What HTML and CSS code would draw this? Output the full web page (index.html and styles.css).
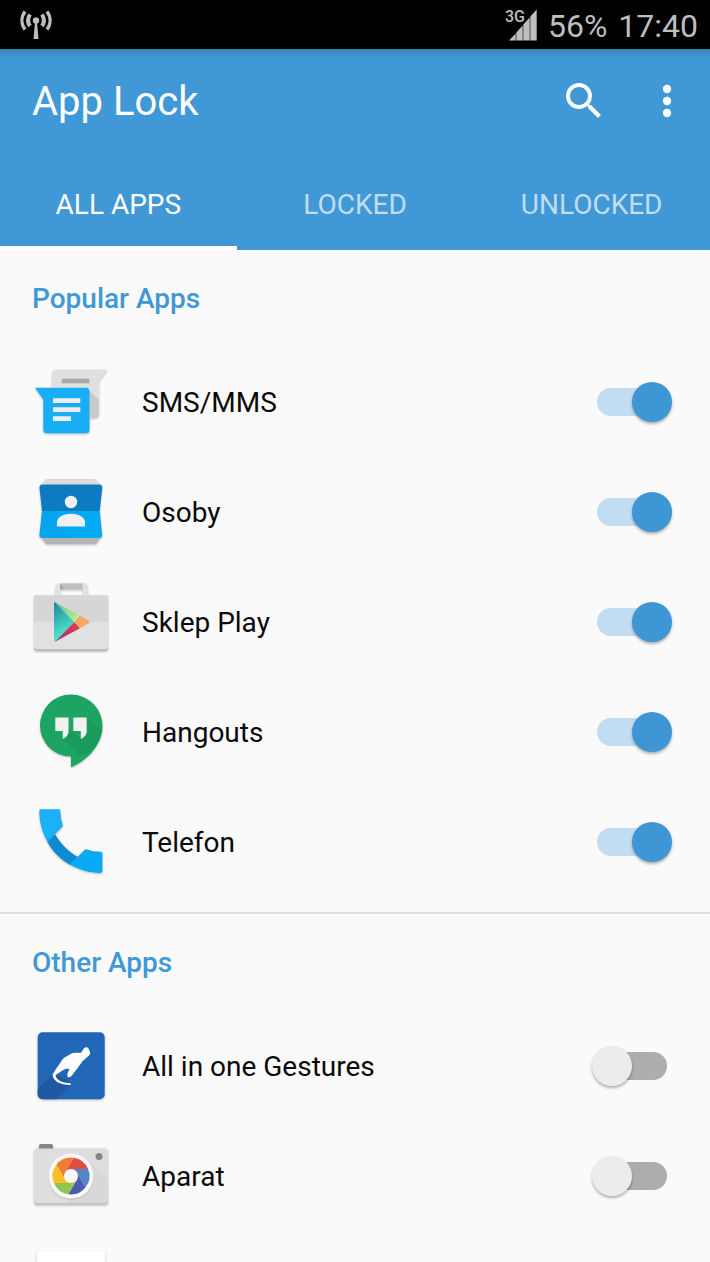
FILE: index.html
```html
<!DOCTYPE html>
<html lang="en">
<head>
<meta charset="utf-8">
<meta name="viewport" content="width=device-width, initial-scale=1">
<title>App Lock</title>
<link rel="stylesheet" href="styles.css">
</head>
<body>
<div class="app">
  <div class="status">
    <svg class="status-antenna" width="32" height="30" viewBox="0 0 32 30" aria-hidden="true">
      <g fill="none" stroke="#bebebe">
        <path stroke-width="3.400" d="M5 1.500C1 7 1 14 5 19.500M27 1.500C31 7 31 14 27 19.500"/>
        <path stroke-width="4" d="M10 4.500C7.500 8.500 7.500 12.500 10 16M22 4.500C24.500 8.500 24.500 12.500 22 16"/>
      </g>
      <circle cx="16" cy="10.500" r="3.200" fill="#bebebe"/>
      <path fill="#bebebe" d="M15 12h2l1.500 17h-5z"/>
    </svg>
    <div class="signal">
      <span class="network">3G</span>
      <svg width="28" height="32" viewBox="0 0 28 32" aria-hidden="true">
        <path fill="#bebebe" d="M0 31.500L6.700 24.500v7zM7.300 23.500l6.400-7v15h-6.400zM14.300 15.500l6.400-7v23h-6.400zM21.300 7.500L27.700.500v31h-6.400z"/>
      </svg>
    </div>
    <span class="battery">56%</span>
    <span class="clock">17:40</span>
  </div>

  <header class="header">
    <div class="toolbar">
      <h1 class="title">App Lock</h1>
      <button class="icon-button" type="button" aria-label="Search">
        <svg width="48" height="48" viewBox="0 0 24 24" fill="#fff"><path d="M15.500 14h-.79l-.28-.27A6.471 6.471 0 0 0 16 9.500 6.500 6.500 0 1 0 9.500 16c1.610 0 3.090-.59 4.230-1.570l.27.280v.79l5 4.990L20.490 19zm-6 0C7.010 14 5 11.990 5 9.500S7.010 5 9.500 5 14 7.010 14 9.500 11.990 14 9.500 14z"/></svg>
      </button>
      <button class="icon-button" type="button" aria-label="More options">
        <svg width="48" height="48" viewBox="0 0 24 24" fill="#fff"><circle cx="12" cy="6" r="2.100"/><circle cx="12" cy="12" r="2.100"/><circle cx="12" cy="18" r="2.100"/></svg>
      </button>
    </div>
    <nav class="tabs">
      <a class="tab tab-active" href="#all">ALL APPS</a>
      <a class="tab" href="#locked">LOCKED</a>
      <a class="tab" href="#unlocked">UNLOCKED</a>
    </nav>
  </header>

  <main class="content">
    <section class="section">
      <h2 class="heading">Popular Apps</h2>
      <label class="row">
        <svg class="icon" viewBox="0 0 78 78" aria-hidden="true">
          <path fill="#e0e0e0" d="M24 6.700h51.300L66.700 18v33a3.500 3.500 0 0 1-3.500 3.500H24a3.700 3.700 0 0 1-3.700-3.500V10.500A3.700 3.700 0 0 1 24 6.700z"/>
          <path fill="#b9b9b9" d="M57 27l9.700 10v14a3.500 3.500 0 0 1-3.500 3.500H57z" opacity=".6"/>
          <path fill="#a9a9a9" d="M29.700 15.700h27.600v4.600H29.700z"/>
          <path fill="#18aef6" d="M3 24.700h51a3.500 3.500 0 0 1 3.500 3.500v38.500a3.500 3.500 0 0 1-3.500 3.500H15a3.700 3.700 0 0 1-3.700-3.500v-30z"/>
          <path fill="#eee" d="M21 35.300h27.300V40H21zM21 44.300h27.300V49H21zM21 53.300h18V58H21z"/>
        </svg>
        <span class="name">SMS/MMS</span>
        <input class="switch" type="checkbox" role="switch" checked>
      </label>
      <label class="row">
        <svg class="icon" viewBox="0 0 78 78" aria-hidden="true">
          <path fill="#dcdcdc" d="M14 6h50l4 6H10z"/>
          <path fill="#b5b5b5" d="M9 64h60l-5 7H14z"/>
          <path fill="#0d7bbf" d="M10.500 11.500h57c2 0 3 1.500 2.700 3.500l-2.500 23H10L7.500 15c-.2-2 1-3.500 3-3.500z"/>
          <path fill="#04a9f4" d="M10 38h57.700l2.500 23.500c.3 2-1 3.500-3 3.500h-57c-2 0-3-1.500-2.700-3.500z"/>
          <path fill="#0d98df" d="M10 38h15v14L38 65H10c-2 0-2.700-1.500-2.500-3.500z" opacity=".3"/>
          <circle cx="39" cy="29" r="6.200" fill="#f0f0f0"/>
          <path fill="#f0f0f0" d="M25 53.500V49c0-5 7-8.300 14-8.300S53 44 53 49v4.500z"/>
        </svg>
        <span class="name">Osoby</span>
        <input class="switch" type="checkbox" role="switch" checked>
      </label>
      <label class="row">
        <svg class="icon" viewBox="0 0 78 78" aria-hidden="true">
          <defs>
            <linearGradient id="play-left" x1="0" y1="0" x2=".3" y2="1"><stop offset="0" stop-color="#2a7fa8"/><stop offset=".5" stop-color="#35bdb9"/><stop offset="1" stop-color="#59efc8"/></linearGradient>
            <linearGradient id="play-top" x1="0" y1="0" x2="1" y2="1"><stop offset="0" stop-color="#4fc0a0"/><stop offset="1" stop-color="#cdf38a"/></linearGradient>
            <linearGradient id="play-base" x1="0" y1="1" x2="1" y2="0"><stop offset="0" stop-color="#8b2ea8"/><stop offset=".6" stop-color="#d5355f"/><stop offset="1" stop-color="#e2404f"/></linearGradient>
          </defs>
          <path fill="#e2e2e2" d="M23.700 13V5c0-3 2-5 5-5h22c3 0 5 2 5 5v8H51V6.300H28V13z"/>
          <path fill="#bfbfbf" d="M28 .500h22.700v5.800H32z"/>
          <path fill="#a5a5a5" d="M28 .500l4.500 5.800H28z"/>
          <path fill="#bdbdbd" d="M2 60h74v5a3 3 0 0 1-3 3H5a3 3 0 0 1-3-3z"/>
          <path fill="#e1e1e1" d="M2 38h74v25a3 3 0 0 1-3 3H5a3 3 0 0 1-3-3z"/>
          <path fill="#d6d6d6" d="M3 12.300h72a1 1 0 0 1 1 1v25.400H2V13.300a1 1 0 0 1 1-1z"/>
          <path fill="url(#play-left)" d="M22 20.500c0-1 .5-1.500 1.500-1L42.300 39 23 58.700c-.7 0-1-.5-1-1.200z"/>
          <path fill="url(#play-top)" d="M23 19.200L48 32.700 42.300 39z"/>
          <path fill="url(#play-base)" d="M23 58.800L48 45.300 42.300 39z"/>
          <path fill="#fda665" d="M48 32.700l8.700 5c1 .6 1 2 0 2.600l-8.700 5L42.300 39z"/>
        </svg>
        <span class="name">Sklep Play</span>
        <input class="switch" type="checkbox" role="switch" checked>
      </label>
      <label class="row">
        <svg class="icon" viewBox="0 0 78 78" aria-hidden="true">
          <path fill="#1da462" d="M39 1.500a31.500 31.500 0 0 1 31.500 31.500C70.500 50 57 67 39 74.300V63.500A31 31 0 0 1 39 1.500z"/>
          <path fill="#158f54" d="M54.700 24.500L70.300 37C69 45 65 52 59 59L48 63 31 45.500l5.500-7 5 0 6 7z" opacity=".4"/>
          <path fill="#f1f1f1" d="M23.300 24.500h13.200V38c0 4-2.500 7-5.700 7.800V38h-7.500zM41.300 24.500h13.400V38c0 4-2.700 7-5.900 7.800V38h-7.500z"/>
        </svg>
        <span class="name">Hangouts</span>
        <input class="switch" type="checkbox" role="switch" checked>
      </label>
      <label class="row">
        <svg class="icon" viewBox="0 0 78 78" aria-hidden="true">
          <path fill="#0f8bd3" d="M23 31c5 9 13 17.500 23 23l-7.500 8C28 56 20 48 15 38z"/>
          <path fill="#1cb0f6" d="M9 6.300h17.500c1.200 0 1.800.6 1.900 1.800.1 5 .8 9 2.300 13.500.3 1 .1 1.800-.6 2.500L15.500 38.700C10 29 7.500 19 7.300 8.200c0-1.300.6-1.900 1.700-1.900z"/>
          <path fill="#0aa9f5" d="M38 61.500l14.500-14.500c.8-.8 1.500-.9 2.500-.6 4.500 1.500 8.800 2.200 13.500 2.300 1.200.1 1.900.8 1.900 2V68c0 1.300-.7 2-2 2-11-.3-21-3-30.400-8.500z"/>
        </svg>
        <span class="name">Telefon</span>
        <input class="switch" type="checkbox" role="switch" checked>
      </label>
    </section>

    <section class="section">
      <h2 class="heading">Other Apps</h2>
      <label class="row">
        <svg class="icon" viewBox="0 0 78 78" aria-hidden="true">
          <rect x="5.700" y="5.300" width="67" height="67" rx="5" fill="#2267b7"/>
          <path fill="#1f569c" d="M22 46L5.700 62v5.300a5 5 0 0 0 5 5H24L40 56z" opacity=".8"/>
          <path fill="#fff" d="M49 25.700L52 21.300C53.500 19.800 55.500 20 56.500 21.500L58 25C58.300 26.500 58.100 27.600 57 28.600L50.700 34 45.300 41.500 39.500 49C38.300 50.300 37 50.600 35.500 50 34.800 47.500 36 45 37.500 42.300 35 41.300 33 42 30.500 43.500L23.500 48C24 52.500 29 56 38.700 56.300V58C28.500 58.200 20.500 54 20.600 47.500L24 42 29.500 34C30.500 32.200 31.500 31.300 33 30.300L39.500 26.500C42 25.300 45.500 26 49 25.700z"/>
        </svg>
        <span class="name">All in one Gestures</span>
        <input class="switch" type="checkbox" role="switch">
      </label>
      <label class="row">
        <svg class="icon" viewBox="0 0 78 78" aria-hidden="true">
          <path fill="#868686" d="M7 12V9a2 2 0 0 1 2-2h10a2 2 0 0 1 2 2v3z"/>
          <rect x="2" y="13" width="74" height="54.800" rx="3.500" fill="#c4c4c4"/>
          <rect x="2" y="11.500" width="74" height="54.500" rx="3.500" fill="#dedede"/>
          <path fill="#c9c9c9" d="M56 24l20 18v20a4 4 0 0 1-4 4H38l-15-12z" opacity=".3"/>
          <circle cx="67" cy="19.500" r="3.500" fill="#868686"/>
          <circle cx="39" cy="40" r="23" fill="#c8c8c8"/>
          <circle cx="39" cy="39" r="22.500" fill="#f8f8f8"/>
          <defs><path id="blade" d="M56.100 32A18.500 18.500 0 0 0 41.500 20.700L32.900 35.500L39 39V32z"/></defs>
          <use href="#blade" fill="#dd4f41"/>
          <use href="#blade" fill="#f07d30" transform="rotate(-60 39 39)"/>
          <use href="#blade" fill="#fdc024" transform="rotate(-120 39 39)"/>
          <use href="#blade" fill="#8fc652" transform="rotate(-180 39 39)"/>
          <use href="#blade" fill="#4b5bad" transform="rotate(-240 39 39)"/>
          <use href="#blade" fill="#5585c6" transform="rotate(-300 39 39)"/>
          <circle cx="39" cy="39" r="7" fill="#fafafa"/>
        </svg>
        <span class="name">Aparat</span>
        <input class="switch" type="checkbox" role="switch">
      </label>
      <div class="row">
        <svg class="icon" viewBox="0 0 78 78" aria-hidden="true">
          <rect x="4.700" y="4" width="68.600" height="68.600" rx="2" fill="#fff"/>
        </svg>
      </div>
    </section>
  </main>
</div>
</body>
</html>
```

FILE: styles.css
```css
* {
  box-sizing: border-box;
}

body {
  margin: 0;
  background: #fafafa;
  color: #0a0a0a;
  font-family: Roboto, "Noto Sans", sans-serif;
  font-size: 28px;
  line-height: 32px;
}

.app {
  display: flex;
  flex-direction: column;
  height: 100vh;
  overflow: hidden;
}

.status {
  display: flex;
  flex: none;
  align-items: center;
  gap: 11px;
  height: 49px;
  padding: 0 12px 0 20px;
  background: #000;
  color: #bebebe;
  font-size: 32px;
}

.status-antenna {
  margin-right: auto;
}

.signal {
  display: grid;
  justify-items: end;
}

.signal > * {
  grid-area: 1 / 1;
}

.network {
  justify-self: start;
  padding-right: 12px;
  font-size: 16px;
  font-weight: 500;
  line-height: 16px;
}

.battery,
.clock {
  padding-top: 2px;
}

.header {
  flex: none;
  background: linear-gradient(#3a80b2, #4098d7 8px);
  color: #fff;
}

.toolbar {
  display: flex;
  align-items: center;
  gap: 35px;
  height: 104px;
  padding: 0 19px 0 32px;
}

.title {
  flex: 1;
  margin: 0;
  padding-top: 2px;
  font-size: 40px;
  font-weight: 400;
  line-height: 48px;
}

.icon-button {
  padding: 0;
  border: 0;
  background: none;
}

.icon-button svg {
  display: block;
}

.tabs {
  display: grid;
  grid-template-columns: repeat(3, 1fr);
}

.tab {
  height: 97px;
  padding-top: 36px;
  border-bottom: 4px solid transparent;
  color: #c0dcf1;
  text-align: center;
  text-decoration: none;
}

.tab-active {
  border-color: #fff;
  color: #fff;
}

.content {
  flex: 1;
  overflow: hidden;
}

.section + .section {
  margin-top: 15px;
  border-top: 2px solid #dedede;
}

.heading {
  margin: 0;
  padding: 33px 32px 32px;
  color: #4098d7;
  font-size: 28px;
  font-weight: 500;
  line-height: 32px;
}

.row {
  display: flex;
  align-items: center;
  gap: 32px;
  height: 110px;
  padding: 0 38px 0 32px;
}

.icon {
  flex: none;
  width: 78px;
  height: 78px;
  filter: drop-shadow(0 1px 1px rgba(0, 0, 0, 0.25));
}

.name {
  flex: 1;
  padding-top: 2px;
}

.switch {
  display: grid;
  flex: none;
  align-items: center;
  width: 80px;
  height: 40px;
  margin: 0;
  appearance: none;
}

.switch::before,
.switch::after {
  grid-area: 1 / 1;
  content: "";
}

.switch::before {
  height: 28px;
  margin: 0 5px;
  border-radius: 14px;
  background: #adadad;
}

.switch::after {
  width: 40px;
  height: 40px;
  border-radius: 50%;
  background: #ececec;
  box-shadow: 0 2px 3px rgba(0, 0, 0, 0.3);
}

.switch:checked::before {
  background: #c2ddf1;
}

.switch:checked::after {
  justify-self: end;
  background: #3e96d5;
}
```
